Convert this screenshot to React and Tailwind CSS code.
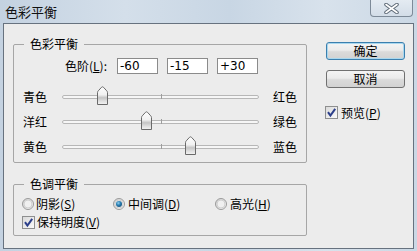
import React from "react";

const cjk = { fontFamily: '"Noto Sans CJK SC", "Noto Sans", sans-serif' };

const sliders = [
  { left: "青色", right: "红色", value: -60 },
  { left: "洋红", right: "绿色", value: -15 },
  { left: "黄色", right: "蓝色", value: 30 },
];

const Thumb = () => (
  <svg width="13" height="19" viewBox="0 0 13 19">
    <defs>
      <linearGradient id="thumbFill" x1="0" y1="0" x2="0" y2="1">
        <stop offset="0" stopColor="#fdfdfd" />
        <stop offset="0.45" stopColor="#f1f1f1" />
        <stop offset="0.62" stopColor="#c4c4c4" />
        <stop offset="0.8" stopColor="#dedede" />
        <stop offset="1" stopColor="#f4f4f4" />
      </linearGradient>
    </defs>
    <path
      d="M1.5 18.5 V6.6 Q1.5 5.6 2.3 4.8 L5.5 1.3 Q6.5 0.3 7.5 1.3 L10.7 4.8 Q11.5 5.6 11.5 6.6 V18.5 Z"
      fill="url(#thumbFill)"
      stroke="#6a6a6a"
    />
  </svg>
);

const Slider = ({ value }) => {
  // thumb centre, in px from the left end of the track
  const center = 40 + ((value + 60) * 0.975);
  return (
    <div className="relative w-[197px] h-[25px] flex items-center">
      <div className="w-full h-[4px] rounded-full border border-[#b7b7b7] bg-[#f6f6f6]" />
      <div className="absolute left-[99px] top-[10px] w-px h-[5px] bg-[#9d9d9d]" />
      <div className="absolute top-[2px]" style={{ left: center - 6 }}>
        <Thumb />
      </div>
    </div>
  );
};

const Radio = ({ checked }) => (
  <svg width="12" height="12" viewBox="0 0 12 12">
    <defs>
      <linearGradient id="radioBg" x1="0" y1="0" x2="1" y2="1">
        <stop offset="0" stopColor="#cfcfcf" />
        <stop offset="1" stopColor="#fafafa" />
      </linearGradient>
      <radialGradient id="radioDot" cx="0.4" cy="0.35" r="0.7">
        <stop offset="0" stopColor="#8fd0f0" />
        <stop offset="0.5" stopColor="#2a7fb3" />
        <stop offset="1" stopColor="#15507a" />
      </radialGradient>
    </defs>
    <circle cx="6" cy="6" r="5.5" fill="url(#radioBg)" stroke="#9a9a9a" />
    <circle cx="6" cy="6" r="4" fill="#f0f0f0" stroke="#d0d0d0" />
    {checked && <circle cx="6" cy="6" r="3" fill="url(#radioDot)" />}
  </svg>
);

const Check = () => (
  <svg width="13" height="13" viewBox="0 0 13 13">
    <defs>
      <linearGradient id="checkBg" x1="0" y1="0" x2="1" y2="1">
        <stop offset="0" stopColor="#d9d9d9" />
        <stop offset="1" stopColor="#fbfbfb" />
      </linearGradient>
    </defs>
    <rect x="0.5" y="0.5" width="12" height="12" fill="url(#checkBg)" stroke="#8e8f8f" />
    <path d="M3 6.2 L5.4 9.6 L10.2 2.8" fill="none" stroke="#2c3f8a" strokeWidth="2" />
  </svg>
);

const U = ({ children }) => <span className="underline underline-offset-1">{children}</span>;

const Button = ({ children, primary }) => (
  <button
    className={
      primary
        ? "w-[79px] h-[18px] rounded-[3px] border border-[#3b7fae] shadow-[inset_0_0_0_1px_#a9d7ee] bg-[linear-gradient(#f4f4f4,#ebebeb_45%,#dadada_55%,#d2d2d2)] flex items-center justify-center text-[12px] leading-none"
        : "w-[79px] h-[18px] rounded-[3px] border border-[#707070] bg-[linear-gradient(#f4f4f4,#ebebeb_45%,#dadada_55%,#d2d2d2)] flex items-center justify-center text-[12px] leading-none"
    }
    style={cjk}
  >
    {children}
  </button>
);

export default function App() {
  return (
    <div
      className="w-[417px] h-[251px] flex flex-col bg-[linear-gradient(90deg,#c4d2e1,#d4dfea_30%,#c8d6e4_55%,#d8e2ec_78%,#cbd8e5)] text-black text-[12px]"
      style={cjk}
    >
      {/* title bar */}
      <div className="h-[23px] flex justify-between items-start pl-[5px]">
        <span className="self-center text-[13px] leading-none text-[#111]">色彩平衡</span>
        <div className="mr-[4px] w-[43px] h-[17px] rounded-b-[4px] border border-t-0 border-[#7d8a98] bg-[linear-gradient(#e4ebf2,#d3dde8)] flex items-center justify-center">
          <svg width="15" height="11" viewBox="0 0 15 11">
            <path d="M2 1.5 L13 9.5 M13 1.5 L2 9.5" stroke="#5f6b78" strokeWidth="3.6" strokeLinecap="round" />
            <path d="M2 1.5 L13 9.5 M13 1.5 L2 9.5" stroke="#ffffff" strokeWidth="1.6" strokeLinecap="round" />
          </svg>
        </div>
      </div>

      {/* body */}
      <div className="flex-1 mx-[3px] mb-[2px] border border-[#67727f] bg-[#ececec] flex">
        <div className="pl-[9px] pt-[12px] flex flex-col">
          <fieldset className="w-[294px] h-[127px] m-0 p-0 border border-[#a6a6a6] rounded-[2px]">
            <legend className="ml-[10px] px-[6px] leading-[16px]">色彩平衡</legend>
            <div className="mt-[6px] pr-[48px] flex justify-end items-center gap-[9px]">
              <span className="mr-[1px] leading-none">
                色阶(<U>L</U>):
              </span>
              {["-60", "-15", "+30"].map((v) => (
                <div
                  key={v}
                  className="w-[41px] h-[16px] border border-[#8b8b8b] bg-white pl-[2px] flex items-center text-[12px] leading-none"
                  style={{ fontFamily: '"DejaVu Sans", sans-serif' }}
                >
                  {v}
                </div>
              ))}
            </div>
            <div className="mt-[10px] flex flex-col">
              {sliders.map((s) => (
                <div key={s.left} className="h-[25px] flex items-center pl-[9px]">
                  <span className="w-[39px] leading-none">{s.left}</span>
                  <Slider value={s.value} />
                  <span className="ml-[14px] leading-none">{s.right}</span>
                </div>
              ))}
            </div>
          </fieldset>

          <fieldset className="mt-[13px] w-[294px] h-[60px] m-0 p-0 border border-[#a6a6a6] rounded-[2px]">
            <legend className="ml-[10px] px-[6px] leading-[16px]">色调平衡</legend>
            <div className="mt-[4px] h-[16px] pl-[8px] grid grid-cols-[91px_102px_auto] items-center">
              <div className="flex items-center gap-[2px]">
                <Radio />
                <span className="leading-none">
                  阴影(<U>S</U>)
                </span>
              </div>
              <div className="flex items-center gap-[3px]">
                <Radio checked />
                <span className="leading-none">
                  中间调(<U>D</U>)
                </span>
              </div>
              <div className="flex items-center gap-[3px]">
                <Radio />
                <span className="leading-none">
                  高光(<U>H</U>)
                </span>
              </div>
            </div>
            <div className="mt-[2px] h-[16px] pl-[8px] flex items-center gap-[2px]">
              <Check />
              <span className="leading-none">
                保持明度(<U>V</U>)
              </span>
            </div>
          </fieldset>
        </div>

        <div className="ml-[19px] pt-[18px] flex flex-col">
          <Button primary>确定</Button>
          <div className="mt-[10px]">
            <Button>取消</Button>
          </div>
          <div className="mt-[18px] -ml-[1px] flex items-center gap-[3px]">
            <Check />
            <span className="leading-none">
              预览(<U>P</U>)
            </span>
          </div>
        </div>
      </div>
    </div>
  );
}
